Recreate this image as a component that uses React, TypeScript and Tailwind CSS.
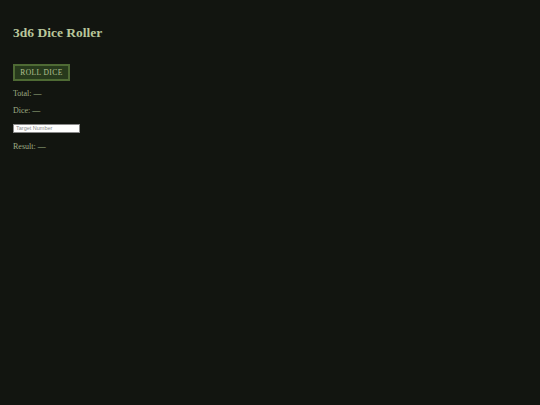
export default function App() {
  return (
    <div className="min-h-[405px] w-full bg-[#121510] px-[13px] pt-[25px] font-['Liberation_Serif',serif] text-[#9fad85]">
      <h1 className="text-[13.5px] font-bold leading-[16px] text-[#b9c79b]">3d6 Dice Roller</h1>

      <button className="mt-[23px] h-[17px] w-[57px] border-2 border-[#4e6a34] bg-[#273a1c] text-[7.5px] tracking-[0.4px] text-[#b3c293]">
        ROLL DICE
      </button>

      <p className="mt-[7px] text-[8px] leading-[10px]">Total: —</p>
      <p className="mt-[7px] text-[8px] leading-[10px]">Dice: —</p>

      <input
        placeholder="Target Number"
        className="mt-[8px] block h-[9px] w-[67px] border border-[#8a8a8a] bg-white px-[2px] font-['Liberation_Sans',sans-serif] text-[5.5px] text-black placeholder:text-[#8a8a8a]"
      />

      <p className="mt-[9px] text-[8px] leading-[10px]">Result: —</p>
    </div>
  )
}
